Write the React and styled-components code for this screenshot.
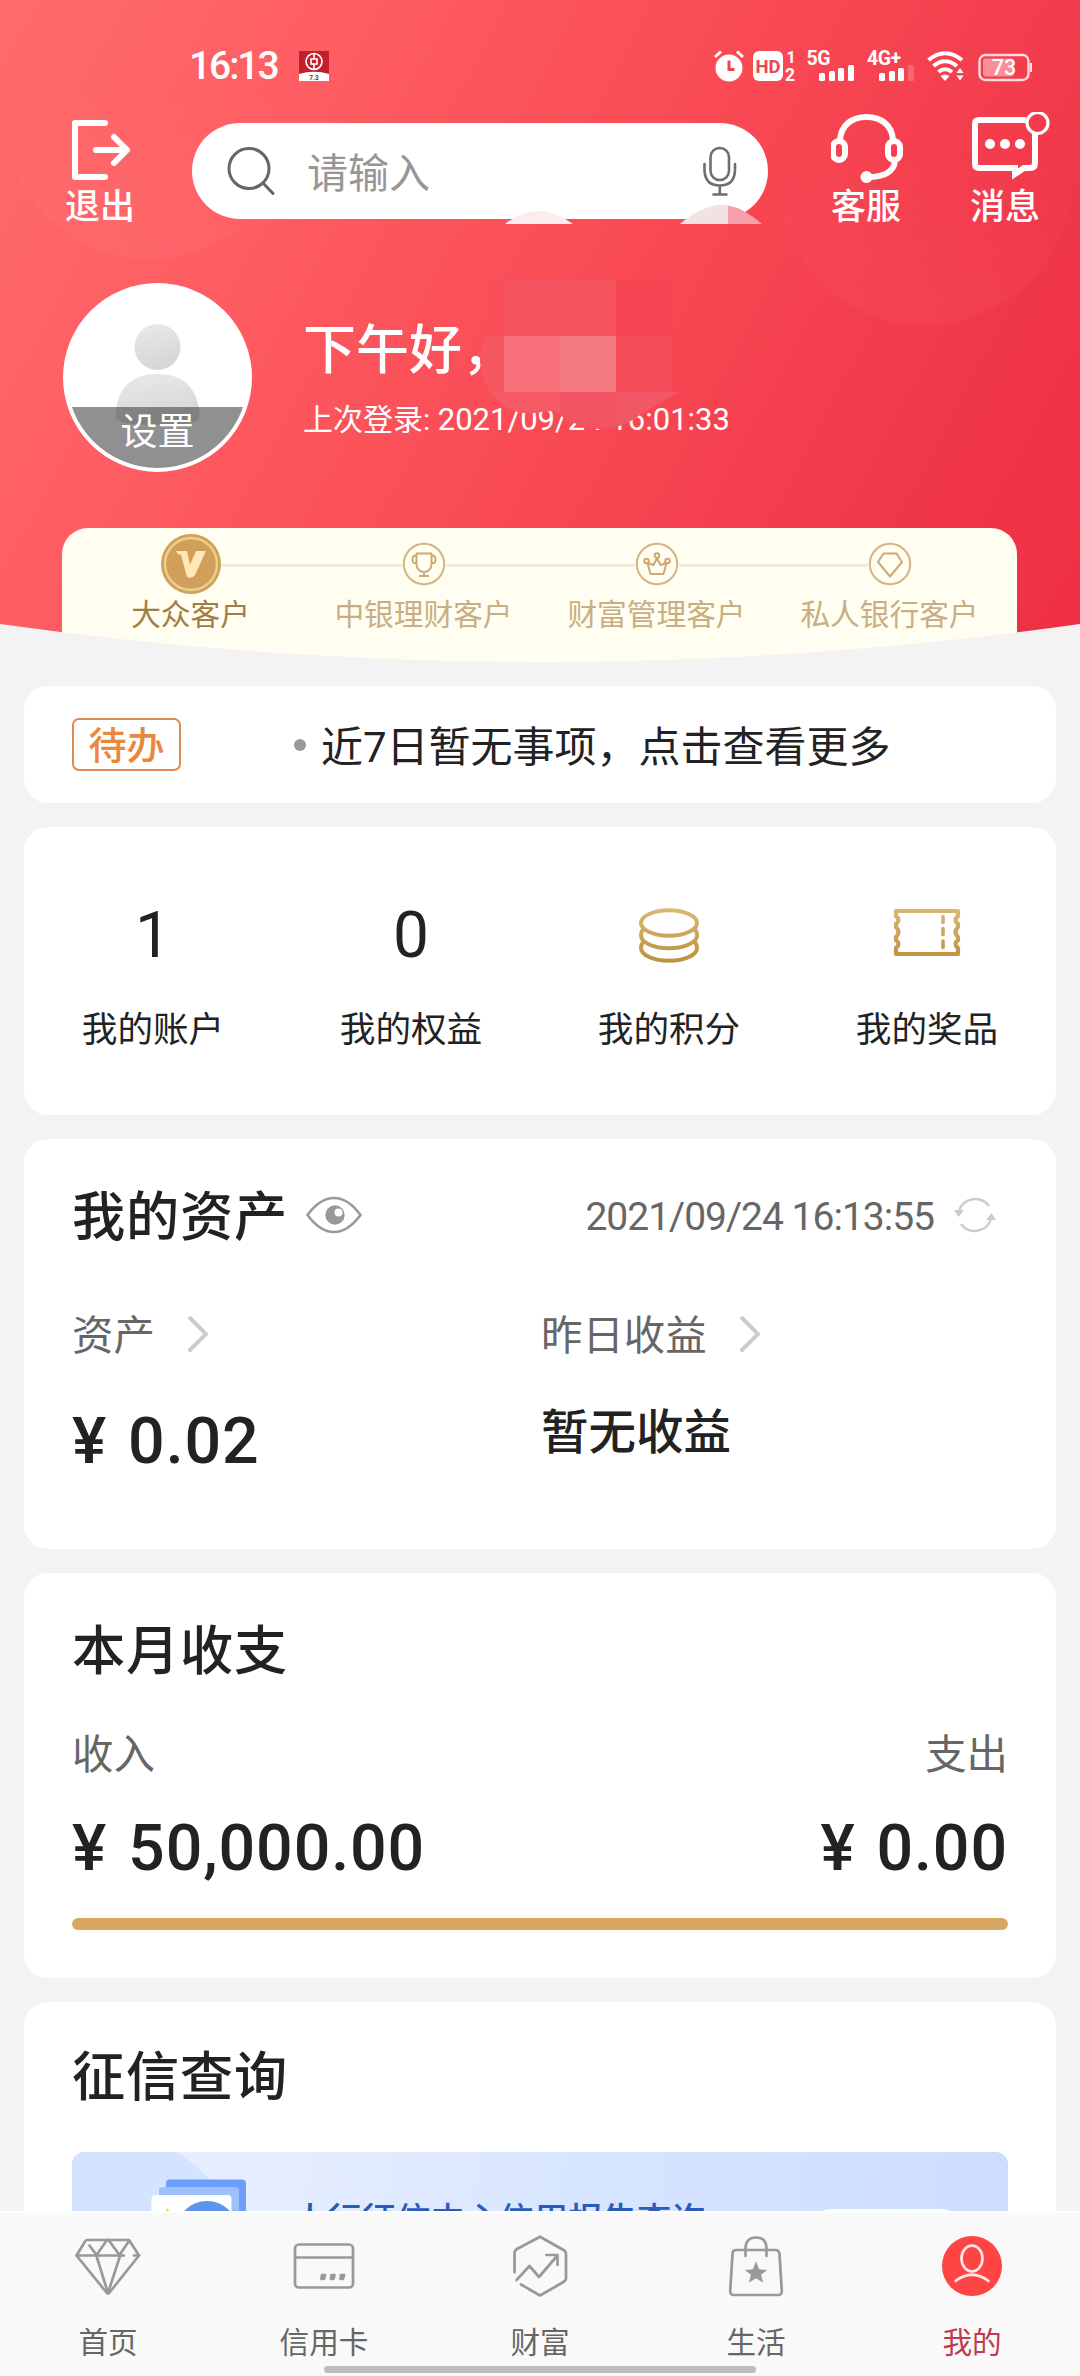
import styled, { createGlobalStyle, css } from "styled-components";

const GlobalStyle = createGlobalStyle`
  * {
    box-sizing: border-box;
  }

  body {
    margin: 0;
    background: #f3f3f3;
    color: #222;
    font-family: Roboto, "Noto Sans CJK SC", sans-serif;
  }

  svg {
    display: block;
    flex: none;
  }
`;

const Screen = styled.div`
  display: flex;
  flex-direction: column;
  width: 1080px;
  height: 2376px;
  overflow: hidden;
`;

/* ---------- header ---------- */

const Header = styled.header`
  position: relative;
  flex: none;
  display: flex;
  flex-direction: column;
  height: 662px;
  color: #fff;
  background: linear-gradient(118deg, #ff6b6b 0%, #fe5e63 24%, #f94a54 54%, #f03649 84%, #ef2f43 100%);
`;

const HeaderDecor = styled.svg`
  position: absolute;
  inset: 0;
`;

const HeaderCurve = styled.svg`
  position: absolute;
  left: 0;
  bottom: 0;
`;

const StatusBar = styled.div`
  position: relative;
  display: flex;
  align-items: center;
  height: 112px;
  padding: 20px 48px 0 189px;
`;

const Clock = styled.span`
  font-size: 39px;
  line-height: 44px;
  letter-spacing: -2.1px;
  font-weight: 500;
`;

const AppBadge = styled.span`
  margin-left: 22px;
`;

const StatusIcons = styled.div`
  margin-left: auto;
`;

const TopRow = styled.div`
  position: relative;
  display: flex;
  align-items: flex-start;
  height: 114px;
  padding-left: 65px;
`;

const TopAction = styled.div`
  display: flex;
  flex-direction: column;
  width: 72px;
  margin-left: ${({ $gap }) => $gap || 0}px;
`;

const TopIcon = styled.div`
  height: 76px;
  width: 84px;
`;

const TopLabel = styled.span`
  font-size: 35px;
  line-height: 40px;
  font-weight: 500;
  white-space: nowrap;
`;

const Search = styled.div`
  display: flex;
  align-items: center;
  width: 576px;
  height: 96px;
  margin: 11px 0 0 55px;
  padding: 0 31px 0 35px;
  border-radius: 48px;
  background: #fff;
`;

const SearchHint = styled.span`
  flex: 1;
  margin: 5px 0 0 32px;
  color: #969696;
  font-size: 41px;
  line-height: 50px;
`;

const Profile = styled.div`
  position: relative;
  display: flex;
  align-items: flex-start;
  margin-top: 57px;
  height: 189px;
  padding-left: 63px;
`;

const Avatar = styled.div`
  display: flex;
  flex-direction: column;
  justify-content: flex-end;
  width: 189px;
  height: 189px;
  border: 4px solid #fff;
  border-radius: 50%;
  overflow: hidden;
  background: #fff;
`;

const AvatarAction = styled.span`
  height: 64px;
  margin-top: -18px;
  background: rgba(70, 70, 70, 0.6);
  font-size: 37px;
  line-height: 52px;
  text-align: center;
`;

const Greeting = styled.div`
  margin: 35px 0 0 51px;
  font-size: 53px;
  line-height: 66px;
  font-weight: 500;
`;

const LastLogin = styled.div`
  margin: 16px 0 0 51px;
  font-size: 30px;
  line-height: 40px;
  white-space: nowrap;

  span {
    font-size: 31px;
  }
`;

const Mosaic = styled.svg`
  position: absolute;
  left: 470px;
  top: 200px;
`;

const Levels = styled.div`
  position: relative;
  display: grid;
  grid-template-columns: repeat(4, 233px);
  margin: 56px 63px 0 62px;
  padding: 6px 11px 0 12px;
  height: 134px;
  border-radius: 26px 26px 0 0;
  background: #fffef0;
`;

const Level = styled.div`
  display: flex;
  flex-direction: column;
  align-items: center;
  color: ${({ $active }) => ($active ? "#a07d47" : "#c9ae84")};
`;

const LevelTrack = styled.div`
  display: flex;
  align-items: center;
  width: 100%;
  height: 60px;
`;

const TrackLine = styled.i`
  flex: 1;
  height: 3px;
  margin-top: 3px;
  background: ${({ $hidden }) => ($hidden ? "transparent" : "#f4ead3")};
`;

const LevelLabel = styled.span`
  margin-top: 1px;
  font-size: 29.7px;
  line-height: 40px;
  white-space: nowrap;
`;

/* ---------- content ---------- */

const Content = styled.main`
  flex: 1;
  min-height: 0;
  display: flex;
  flex-direction: column;
  gap: 24px;
  padding: 24px 24px 0;
  overflow: hidden;
`;

const Card = styled.section`
  flex: none;
  height: ${({ $height }) => $height}px;
  padding: ${({ $top }) => $top || 0}px 48px 0;
  border-radius: 24px;
  background: #fff;
`;

const TodoCard = styled(Card)`
  display: flex;
  align-items: center;
`;

const TodoTag = styled.span`
  width: 109px;
  height: 53px;
  border: 2px solid #dc8b53;
  border-radius: 7px;
  color: #e8883e;
  font-size: 38px;
  line-height: 52px;
  text-align: center;
  font-weight: 500;
`;

const Dot = styled.i`
  width: 12px;
  height: 12px;
  margin-left: 113px;
  border-radius: 50%;
  background: #999;
`;

const TodoText = styled.span`
  margin: 7px 0 0 15px;
  font-size: 42px;
  line-height: 54px;
  white-space: nowrap;
`;

const ShortcutCard = styled(Card)`
  display: grid;
  grid-template-columns: repeat(4, 1fr);
  padding: 0;
`;

const Shortcut = styled.div`
  display: flex;
  flex-direction: column;
  align-items: center;
  padding-top: 73px;
`;

const ShortcutValue = styled.div`
  display: flex;
  align-items: center;
  height: 72px;
  font-size: 64px;
  line-height: 72px;
`;

const ShortcutLabel = styled.span`
  margin-top: 33px;
  font-size: 35.6px;
  line-height: 50px;
`;

const TitleRow = styled.div`
  display: flex;
  align-items: center;
  height: 64px;
  padding-right: 12px;

  svg {
    margin-bottom: 7px;
  }
`;

const Title = styled.h2`
  margin: 0 18px 0 0;
  font-size: 53.2px;
  line-height: 64px;
  font-weight: 500;
  letter-spacing: 0.8px;
`;

const Updated = styled.span`
  margin: 0 20px 3px auto;
  color: #666;
  font-size: 39px;
  line-height: 50px;
  letter-spacing: -1px;
`;

const Columns = styled.div`
  display: grid;
  grid-template-columns: 469px 1fr;
  margin-top: 61px;
`;

const Label = styled.div`
  display: flex;
  align-items: center;
  gap: 32px;
  height: 50px;
  color: #666;
  font-size: 41.4px;
  line-height: 50px;

  svg {
    margin-bottom: 5px;
  }
`;

const Amount = styled.div`
  margin-top: ${({ $gap }) => $gap}px;
  font-size: 64.5px;
  line-height: 70px;
  font-weight: 500;
  letter-spacing: 0.9px;
  word-spacing: 4px;
  white-space: nowrap;
`;

const NoEarnings = styled.div`
  margin-top: 45px;
  font-size: 47.5px;
  line-height: 54px;
  font-weight: 500;
`;

const Split = styled.div`
  display: flex;
  justify-content: space-between;
  margin-top: 46px;
`;

const Side = styled.div`
  ${({ $end }) =>
    $end &&
    css`
      display: flex;
      flex-direction: column;
      align-items: flex-end;
    `}
`;

const Bar = styled.div`
  height: 12px;
  margin-top: 35px;
  border-radius: 6px;
  background: #d8a862;
`;

const Banner = styled.div`
  display: flex;
  align-items: flex-start;
  height: 160px;
  margin-top: 42px;
  border-radius: 12px;
  overflow: hidden;
  background: linear-gradient(100deg, #e6eeff 20%, #d6e4ff 58%, #cdddff 100%);
`;

const BannerText = styled.span`
  margin: 46px 0 0 -34px;
  color: #2a5cb8;
  font-size: 34.4px;
  line-height: 44px;
  font-weight: 500;
  white-space: nowrap;
`;

const BannerButton = styled.span`
  width: 164px;
  height: 56px;
  margin: 57px 40px 0 auto;
  border-radius: 28px;
  background: #fff;
`;

/* ---------- tab bar ---------- */

const TabBar = styled.nav`
  position: relative;
  flex: none;
  display: grid;
  grid-template-columns: repeat(5, 1fr);
  height: 165px;
  border-top: 2px solid #fff;
  background: #f9f9f9;
`;

const Tab = styled.div`
  display: flex;
  flex-direction: column;
  align-items: center;
  padding-top: 20px;
  color: ${({ $active }) => ($active ? "#c03a50" : "#666")};
  font-size: 29.6px;
  line-height: 40px;

  span {
    margin-top: 24px;
  }
`;

const HomeIndicator = styled.i`
  position: absolute;
  left: 324px;
  bottom: 3px;
  width: 432px;
  height: 7px;
  border-radius: 4px;
  background: #bdbdbd;
`;

/* ---------- drawings ---------- */

function BankLogo() {
  return (
    <svg width="30" height="30" viewBox="0 0 30 30">
      <rect width="30" height="30" fill="#c41f2d" />
      <path d="M0 23Q15 18.500 30 23V30H0Z" fill="#fff" />
      <g fill="none" stroke="#fff" strokeWidth="1.600">
        <circle cx="15" cy="10.500" r="8" />
        <rect x="12" y="8" width="6" height="5" />
        <path d="M15 2.500V8M15 13V18.500" />
      </g>
      <text x="15" y="28.500" textAnchor="middle" fontSize="6.500" fontWeight="700" fill="#7a3030">
        7.3
      </text>
    </svg>
  );
}

function SystemIcons() {
  return (
    <svg width="320" height="36" viewBox="0 0 320 36" fill="#fff" fontFamily="Roboto" fontWeight="700">
      <circle cx="17" cy="20" r="13.500" />
      <path d="M3 9L9 3.500M31 9L25 3.500" stroke="#fff" strokeWidth="3" />
      <path d="M17 12.500V21.500H22.500" fill="none" stroke="#f0434f" strokeWidth="3" />
      <rect x="41" y="3" width="30" height="30" rx="6" />
      <text x="56" y="24.700" textAnchor="middle" fontSize="18.500" fill="#ef4352">
        HD
      </text>
      <text x="74.500" y="15" fontSize="16">
        1
      </text>
      <text x="73" y="33" fontSize="17.500">
        2
      </text>
      <text x="94.500" y="17" fontSize="19.500" letterSpacing="-0.500">
        5G
      </text>
      <rect x="107" y="25" width="6" height="8" rx="1.500" />
      <rect x="117" y="23" width="6" height="10" rx="1.500" />
      <rect x="126" y="20" width="6" height="13" rx="1.500" />
      <rect x="136" y="17" width="6" height="16" rx="1.500" />
      <text x="155" y="17" fontSize="19.500" letterSpacing="-0.500">
        4G+
      </text>
      <rect x="167" y="25" width="6" height="8" rx="1.500" />
      <rect x="177" y="23" width="6" height="10" rx="1.500" />
      <rect x="186" y="20" width="6" height="13" rx="1.500" />
      <rect x="196" y="17" width="6" height="16" rx="1.500" opacity="0.200" />
      <g fill="none" stroke="#fff" strokeWidth="4">
        <path d="M216.500 12Q233 -1.500 250 12" />
        <path d="M221.500 18Q233 8.500 245 18" />
        <path d="M226.500 24Q233 18.500 240 24" />
      </g>
      <path d="M228.500 28Q233 25 237.500 28L233 33Z" />
      <path d="M244.500 25L248 20L251.500 25ZM244.500 27.500H251.500L248 32.500Z" />
      <rect x="267.500" y="7" width="49" height="25" rx="6" fill="none" stroke="#ffdbe0" strokeWidth="2.400" />
      <rect x="271" y="10.500" width="31" height="18" rx="3" fill="#f98e99" />
      <rect x="318" y="15" width="2" height="9" fill="#ffdbe0" />
      <text x="292" y="27" textAnchor="middle" fontSize="21.500" fontWeight="500">
        73
      </text>
    </svg>
  );
}

function LogoutIcon() {
  return (
    <svg width="76" height="74" viewBox="0 0 76 74" fill="none" stroke="#fff" strokeWidth="6" strokeLinecap="round" strokeLinejoin="round">
      <path d="M40 11H10V65H40M31 38H61M49 25L62 38L49 51" />
    </svg>
  );
}

function HeadsetIcon() {
  return (
    <svg width="76" height="74" viewBox="0 0 76 74" fill="none" stroke="#fff" strokeWidth="6">
      <path d="M9 28C10 13 21 5 35.500 5S61 13 62 28M64 50C62 60 52 65 37 65" />
      <rect x="2" y="29" width="12" height="19" rx="6" />
      <rect x="57" y="29" width="12" height="19" rx="6" />
      <circle cx="35.500" cy="65" r="6" fill="#fff" stroke="none" />
    </svg>
  );
}

function MessageIcon() {
  return (
    <svg width="84" height="74" viewBox="0 0 84 74" fill="none" stroke="#fff" strokeWidth="6">
      <path d="M56 8H9Q5 8 5 12V52Q5 56 9 56H45V62L54 56H60Q65 56 65 51V22" />
      <circle cx="67.500" cy="11" r="10.500" strokeWidth="3.200" />
      <g fill="#fff" stroke="none">
        <circle cx="20" cy="32" r="5" />
        <circle cx="35" cy="32" r="5" />
        <circle cx="50" cy="32" r="5" />
      </g>
    </svg>
  );
}

function SearchIcon() {
  return (
    <svg width="48" height="48" viewBox="0 0 48 48" fill="none" stroke="#666" strokeWidth="3" strokeLinecap="round">
      <circle cx="22" cy="21.500" r="20" />
      <path d="M36 36L46 46.500" />
    </svg>
  );
}

function MicIcon() {
  return (
    <svg width="34" height="50" viewBox="0 0 34 50" fill="none" stroke="#6a6f70" strokeWidth="2.600" strokeLinecap="round">
      <rect x="7.500" y="2" width="18.500" height="32" rx="9.200" />
      <path d="M1.500 18V24Q2 39.500 16.800 39.500T32 24V18M16.800 40V48M10.500 48.500H23.500" />
    </svg>
  );
}

function PersonShape() {
  return (
    <svg width="181" height="138" viewBox="0 0 181 138">
      <defs>
        <linearGradient id="person" x1="0" y1="0" x2="0.300" y2="1">
          <stop offset="0" stopColor="#eaeaea" />
          <stop offset="1" stopColor="#d6d6d6" />
        </linearGradient>
      </defs>
      <circle cx="90.500" cy="60" r="23" fill="url(#person)" />
      <path d="M48.500 130C49 104 62 87 90.500 87S132 104 132.500 130Q132 138 90.500 138T48.500 130Z" fill="url(#person)" />
    </svg>
  );
}

function LevelIcon({ type }) {
  if (type === "v") {
    return (
      <svg width="60" height="60" viewBox="0 0 60 60">
        <circle cx="30" cy="30" r="30" fill="#cda25d" />
        <circle cx="30" cy="30" r="26" fill="#d0a05a" stroke="#f0cd8c" strokeWidth="2.400" />
        <path d="M15 17H26L29 31L35 17H45L34 41Q31 45 26 43L20 21Q17 21 15 17Z" fill="#ffe7b8" />
      </svg>
    );
  }
  return (
    <svg width="44" height="44" viewBox="0 0 44 44" fill="none" stroke="#cfa874" strokeWidth="2" strokeLinejoin="round">
      <circle cx="22" cy="22" r="20.200" stroke="#d5b384" />
      {type === "cup" && (
        <path d="M14.500 11.500H29.500V22Q29 29.500 22 30Q15 29.500 14.500 22ZM14.500 14Q10.500 13 10.500 17.500T14.500 21M29.500 14Q33.500 13 33.500 17.500T29.500 21M22 30V33.500M17 34H27" />
      )}
      {type === "crown" && (
        <>
          <path d="M12.500 21L15.500 32H28.500L31.500 21L25.500 23L22 16L18.500 23Z" />
          <circle cx="11.500" cy="19" r="2.300" />
          <circle cx="22" cy="13.500" r="2.300" />
          <circle cx="32.500" cy="19" r="2.300" />
        </>
      )}
      {type === "gem" && <path d="M15.500 11.500H28.500L34 20L22 34.500L10 20Z" />}
    </svg>
  );
}

function Gold() {
  return (
    <defs>
      <linearGradient id="gold" gradientUnits="userSpaceOnUse" x1="0" y1="0" x2="0" y2="56">
        <stop offset="0" stopColor="#dcb877" />
        <stop offset="1" stopColor="#b9903a" />
      </linearGradient>
    </defs>
  );
}

function CoinsIcon() {
  return (
    <svg width="64" height="56" viewBox="0 0 64 56" fill="none" stroke="url(#gold)" strokeWidth="4">
      <Gold />
      <ellipse cx="32" cy="15" rx="28" ry="12.800" />
      <path d="M6 21Q4 24 4 27.500A28 12.800 0 0 0 60 27.500Q60 24 58 21" />
      <path d="M6 34Q4 37 4 40A28 12.800 0 0 0 60 40Q60 37 58 34" />
    </svg>
  );
}

function TicketIcon() {
  return (
    <svg width="68" height="58" viewBox="0 0 68 58" fill="none" stroke="url(#gold)" strokeWidth="4.200" strokeLinejoin="round">
      <path d="M3 4H65V9Q60 13 65 17V20Q60 25 65 30V33Q60 37 65 41V47H3V41Q8 37 3 33V30Q8 25 3 20V17Q8 13 3 9Z" />
      <path d="M50 9.500V15.500M50 21.500V27.500M50 34V40.500" strokeWidth="3.600" strokeLinecap="round" />
    </svg>
  );
}

function EyeIcon() {
  return (
    <svg width="56" height="38" viewBox="0 0 56 38">
      <path d="M1.500 19Q14 2 28 2T54.500 19Q42 36 28 36T1.500 19Z" fill="none" stroke="#999" strokeWidth="2.600" />
      <circle cx="29" cy="19" r="9.700" fill="#999" />
      <circle cx="32.500" cy="16.500" r="4" fill="#fff" />
    </svg>
  );
}

function RefreshIcon() {
  return (
    <svg width="42" height="36" viewBox="0 0 42 36" fill="none" stroke="#ccc" strokeWidth="2.400">
      <path d="M35 9A17 17 0 0 0 5 14M7 27A17 17 0 0 0 37 22" />
      <path d="M0 13H10L4.500 20ZM42 23H32L37.500 16Z" fill="#ccc" stroke="none" />
    </svg>
  );
}

function Chevron() {
  return (
    <svg width="22" height="38" viewBox="0 0 22 38" fill="none" stroke="#ccc" strokeWidth="4" strokeLinecap="round" strokeLinejoin="round">
      <path d="M3 3L19 19L3 35" />
    </svg>
  );
}

function ReportIcon() {
  return (
    <svg width="255" height="160" viewBox="0 0 255 160">
      <path d="M0 0H105Q150 30 180 90V160H0Z" fill="#d4e3ff" />
      <rect x="94" y="27.500" width="80" height="110" rx="4" fill="#6c9ffb" />
      <rect x="87" y="35" width="80" height="110" rx="4" fill="#9dc0fb" />
      <rect x="79.500" y="43" width="80" height="110" rx="4" fill="#fff" />
      <circle cx="135" cy="80" r="31" fill="#5b95ee" />
      <path d="M93 61L95.500 56L98 61Z" fill="#f0c75c" />
    </svg>
  );
}

function TabIcon({ type }) {
  return (
    <svg width="68" height="66" viewBox="0 0 68 66" fill="none" stroke="#999" strokeWidth="2.700" strokeLinecap="round" strokeLinejoin="round">
      {type === "home" && (
        <>
          <path d="M13 7H55L65 22.500L35.500 59.500Q34 61 32.500 59.500L2.500 22.500L11 8.500Q12 7 13 7Z" />
          <path d="M2.500 22.500H50M60 22.500H65M15.500 12.500L22.500 22L33 7M34.500 7L45.500 22L55 8M22.500 23L34 60L46 23" />
        </>
      )}
      {type === "card" && (
        <>
          <rect x="5" y="11.500" width="58" height="43" rx="4" />
          <path d="M5 24.500H63" />
          <path d="M32 42H35L34 46H31.500ZM41.500 42H44.500L43.500 46H41ZM51 42H54L53 46H50.500Z" fill="#999" />
        </>
      )}
      {type === "wealth" && (
        <>
          <path d="M8.500 39.500V20Q8.500 17.500 11 16L34 3.800L57.500 17Q60 18.500 60 21V45Q60 47.500 57.500 49L34 62.500L15 51.500" />
          <path d="M10.500 47L23.500 33L33 44L51 23M40.500 22H51.500V32" />
        </>
      )}
      {type === "life" && (
        <>
          <path d="M14 17H53Q57 17 57.500 21L59.800 58Q60 62 56 62H12Q8 62 8.200 58L10.500 21Q10.500 17 14 17Z" />
          <path d="M23.500 23V15Q24 4.500 34 4.500T44.500 15V23" />
          <path d="M34 29L37 36.500L44.500 37.200L38.800 41.800L40.800 49.200L34 45L27.200 49.200L29.200 41.800L23.500 37.200L31 36.500Z" fill="#999" strokeWidth="0.500" />
        </>
      )}
      {type === "me" && (
        <g stroke="#ffe6e6">
          <circle cx="34" cy="33" r="30" fill="#ff4444" stroke="none" />
          <ellipse cx="34" cy="25.500" rx="10.500" ry="12.800" />
          <path d="M17.500 48Q34 35.500 50.500 48" />
        </g>
      )}
    </svg>
  );
}

/* Pixelated patch that hides the customer's name */
function NameMask() {
  return (
    <Mosaic width="310" height="240" viewBox="470 200 310 240">
      <defs>
        <clipPath id="blob">
          <path d="M489 280L499 318Q480 334 480 362Q482 380 490 392Q508 416 534 413Q548 411 554 411Q578 429 600 429Q622 429 640 415L679 392L672 336V280Z" />
        </clipPath>
      </defs>
      <path d="M505 224Q538 198 573 224Z" fill="#fcecee" />
      <path d="M680 224Q702 205 721 205H728V224Z" fill="#f1e3e4" />
      <path d="M728 205.500Q744 208 762 224H728Z" fill="#f89fa9" />
      <g clipPath="url(#blob)">
        <rect x="470" y="280" width="34" height="56" fill="#f84f5a" />
        <rect x="470" y="336" width="34" height="56" fill="#f75760" />
        <rect x="504" y="280" width="112" height="56" fill="#f6525e" />
        <rect x="616" y="280" width="56" height="56" fill="#f54452" />
        <rect x="504" y="336" width="56" height="56" fill="#f66f79" />
        <rect x="560" y="336" width="56" height="56" fill="#f47880" />
        <rect x="616" y="336" width="56" height="56" fill="#f44b59" />
        <rect x="470" y="392" width="90" height="48" fill="#f45b67" />
        <rect x="560" y="392" width="56" height="48" fill="#f25362" />
        <rect x="616" y="392" width="70" height="48" fill="#f25765" />
      </g>
    </Mosaic>
  );
}

const levels = [
  { type: "v", name: "大众客户", active: true },
  { type: "cup", name: "中银理财客户" },
  { type: "crown", name: "财富管理客户" },
  { type: "gem", name: "私人银行客户" },
];

const shortcuts = [
  { value: "1", name: "我的账户" },
  { value: "0", name: "我的权益" },
  { value: <CoinsIcon />, name: "我的积分" },
  { value: <TicketIcon />, name: "我的奖品" },
];

const tabs = [
  { type: "home", name: "首页" },
  { type: "card", name: "信用卡" },
  { type: "wealth", name: "财富" },
  { type: "life", name: "生活" },
  { type: "me", name: "我的", active: true },
];

function App() {
  return (
    <Screen>
      <GlobalStyle />
      <Header>
        <HeaderDecor width="1080" height="662">
          <defs>
            <linearGradient id="bubble" x1="0" y1="0" x2="0" y2="1">
              <stop offset="0.400" stopColor="#fff" stopOpacity="0" />
              <stop offset="1" stopColor="#fff" stopOpacity="0.035" />
            </linearGradient>
          </defs>
          <circle cx="150" cy="112" r="147" fill="url(#bubble)" />
          <circle cx="925" cy="178" r="147" fill="url(#bubble)" />
        </HeaderDecor>
        <StatusBar>
          <Clock>16:13</Clock>
          <AppBadge>
            <BankLogo />
          </AppBadge>
          <StatusIcons>
            <SystemIcons />
          </StatusIcons>
        </StatusBar>
        <TopRow>
          <TopAction>
            <TopIcon>
              <LogoutIcon />
            </TopIcon>
            <TopLabel>退出</TopLabel>
          </TopAction>
          <Search>
            <SearchIcon />
            <SearchHint>请输入</SearchHint>
            <MicIcon />
          </Search>
          <TopAction $gap={63}>
            <TopIcon>
              <HeadsetIcon />
            </TopIcon>
            <TopLabel>客服</TopLabel>
          </TopAction>
          <TopAction $gap={67}>
            <TopIcon>
              <MessageIcon />
            </TopIcon>
            <TopLabel>消息</TopLabel>
          </TopAction>
        </TopRow>
        <Profile>
          <Avatar>
            <PersonShape />
            <AvatarAction>设置</AvatarAction>
          </Avatar>
          <div>
            <Greeting>下午好，</Greeting>
            <LastLogin>
              上次登录: <span>2021/09/24 16:01:33</span>
            </LastLogin>
          </div>
        </Profile>
        <Levels>
          {levels.map((level, i) => (
            <Level key={level.type} $active={level.active}>
              <LevelTrack>
                <TrackLine $hidden={i === 0} />
                <LevelIcon type={level.type} />
                <TrackLine $hidden={i === levels.length - 1} />
              </LevelTrack>
              <LevelLabel>{level.name}</LevelLabel>
            </Level>
          ))}
        </Levels>
        <NameMask />
        <HeaderCurve width="1080" height="38" viewBox="0 0 1080 38">
          <path d="M0 0Q540 76 1080 0V38H0Z" fill="#f3f3f3" />
        </HeaderCurve>
      </Header>

      <Content>
        <TodoCard $height={117}>
          <TodoTag>待办</TodoTag>
          <Dot />
          <TodoText>近7日暂无事项，点击查看更多</TodoText>
        </TodoCard>

        <ShortcutCard $height={288}>
          {shortcuts.map((item) => (
            <Shortcut key={item.name}>
              <ShortcutValue>{item.value}</ShortcutValue>
              <ShortcutLabel>{item.name}</ShortcutLabel>
            </Shortcut>
          ))}
        </ShortcutCard>

        <Card $height={410} $top={47}>
          <TitleRow>
            <Title>我的资产</Title>
            <EyeIcon />
            <Updated>2021/09/24 16:13:55</Updated>
            <RefreshIcon />
          </TitleRow>
          <Columns>
            <div>
              <Label>
                资产 <Chevron />
              </Label>
              <Amount $gap={45}>¥ 0.02</Amount>
            </div>
            <div>
              <Label>
                昨日收益 <Chevron />
              </Label>
              <NoEarnings>暂无收益</NoEarnings>
            </div>
          </Columns>
        </Card>

        <Card $height={405} $top={47}>
          <Title>本月收支</Title>
          <Split>
            <Side>
              <Label>收入</Label>
              <Amount $gap={33}>¥ 50,000.00</Amount>
            </Side>
            <Side $end>
              <Label>支出</Label>
              <Amount $gap={33}>¥ 0.00</Amount>
            </Side>
          </Split>
          <Bar />
        </Card>

        <Card $height={400} $top={44}>
          <Title>征信查询</Title>
          <Banner>
            <ReportIcon />
            <BannerText>人行征信中心信用报告查询</BannerText>
            <BannerButton />
          </Banner>
        </Card>
      </Content>

      <TabBar>
        {tabs.map((tab) => (
          <Tab key={tab.type} $active={tab.active}>
            <TabIcon type={tab.type} />
            <span>{tab.name}</span>
          </Tab>
        ))}
        <HomeIndicator />
      </TabBar>
    </Screen>
  );
}

export default App;
